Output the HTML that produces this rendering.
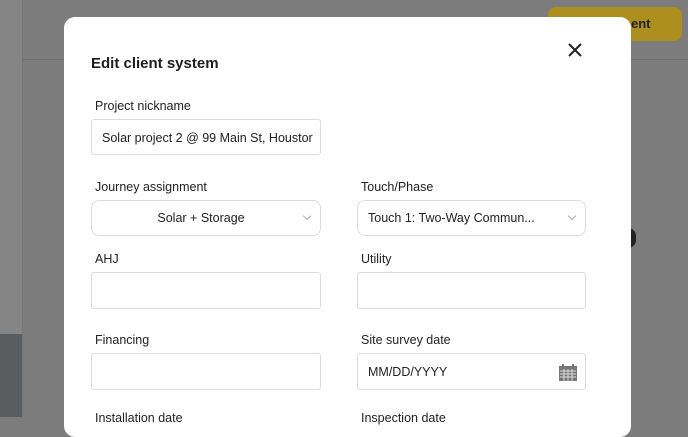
<!DOCTYPE html>
<html><head><style>
body{margin:0;width:688px;height:417px;overflow:hidden;background:#7c7c7c;font-family:"Liberation Sans",sans-serif;position:relative}
.side{position:absolute;left:0;top:0;width:22px;height:417px;background:#858585;border-right:1px solid #777}
.side .dk{position:absolute;left:0;top:334px;width:22px;height:83px;background:#5a5d60}
.hline{position:absolute;left:22px;right:0;top:59px;height:1px;background:#6f6f6f}
.btn{position:absolute;left:548px;top:7px;width:134px;height:34px;border-radius:8px;background:#ac8f1e;font-size:13px;font-weight:bold;color:#222;line-height:34px}
.modal{position:absolute;left:64px;top:17px;width:567px;height:420px;background:#fff;border-radius:11px}
.t{position:absolute;left:27px;top:38px;font-size:15px;font-weight:bold;color:#1d1d1d}
.x{position:absolute;left:503px;top:25px}
.l{position:absolute;font-size:12.5px;color:#222}
.i{position:absolute;width:228px;height:34px;border:1px solid #dcdcdc;border-radius:3px;box-sizing:border-box;font-size:12.5px;color:#222;line-height:34px;padding-left:10px}
.s{border-radius:8px;height:36px;line-height:34px}
.ch{position:absolute;right:10px;top:12px;width:5px;height:5px;border-right:1.2px solid #aaa;border-bottom:1.2px solid #aaa;transform:rotate(45deg)}
</style></head><body>
<div class="side"><div class="dk"></div></div>
<div class="hline"></div>
<div class="btn"><span style="position:absolute;left:83px">ent</span></div>
<div style="position:absolute;left:620px;top:228px;width:16px;height:20px;border-radius:8px;background:#222"></div>
<div class="modal">
<div class="t">Edit client system</div>
<svg class="x" width="16" height="16" viewBox="0 0 16 16"><path d="M2 2L14 14M14 2L2 14" stroke="#222" stroke-width="2"/></svg>
<div class="l" style="left:31px;top:82px">Project nickname</div>
<div class="i" style="left:27px;top:102px;width:230px;height:36px;line-height:36px;overflow:hidden;white-space:nowrap;padding-right:0">Solar project 2 @ 99 Main St, Houstor</div>
<div class="l" style="left:31px;top:163px">Journey assignment</div>
<div class="i s" style="left:27px;top:183px;width:230px;text-align:center;padding-left:0;padding-right:10px">Solar + Storage<div class="ch"></div></div>
<div class="l" style="left:297px;top:163px">Touch/Phase</div>
<div class="i s" style="left:293px;top:183px;width:229px">Touch 1: Two-Way Commun...<div class="ch"></div></div>
<div class="l" style="left:31px;top:235px">AHJ</div>
<div class="i" style="left:27px;top:255px;width:230px;height:37px"></div>
<div class="l" style="left:297px;top:235px">Utility</div>
<div class="i" style="left:293px;top:255px;width:229px;height:37px"></div>
<div class="l" style="left:31px;top:316px">Financing</div>
<div class="i" style="left:27px;top:336px;width:230px;height:37px"></div>
<div class="l" style="left:297px;top:316px">Site survey date</div>
<div class="i" style="left:293px;top:336px;width:229px;height:37px;line-height:37px">MM/DD/YYYY
<svg style="position:absolute;right:8px;top:10px" width="18" height="17" viewBox="0 0 18 17"><rect x="0" y="2" width="18" height="15" fill="#777"/><rect x="3" y="0" width="2" height="4" fill="#777"/><rect x="13" y="0" width="2" height="4" fill="#777"/><path d="M1 7H17M1 10H17M1 13H17M5 5V17M9 5V17M13 5V17" stroke="#ddd" stroke-width="1"/></svg></div>
<div class="l" style="left:31px;top:394px">Installation date</div>
<div class="l" style="left:297px;top:394px">Inspection date</div>
</div>
</body></html>
